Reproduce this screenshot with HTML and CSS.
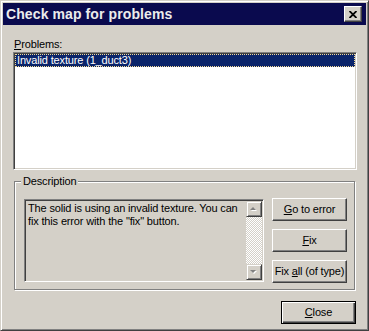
FILE: index.html
```html
<!DOCTYPE html>
<html lang="en">
<head>
    <meta charset="UTF-8">
    <title>Check map for problems</title>
    <link rel="stylesheet" href="styles.css">
</head>
<body>

<div class="window">
    <div class="titlebar">
        <span class="title">Check map for problems</span>
        <div class="caption-btn">
            <svg width="8" height="7" viewBox="0 0 8 7">
                <path d="M0.5 0 L7.5 7 M7.5 0 L0.5 7" stroke="#000" stroke-width="1.8" fill="none"/>
            </svg>
        </div>
    </div>

    <div class="dialog">
        <div class="label"><u>P</u>roblems:</div>
        <div class="listbox">
            <div class="list-item selected">Invalid texture (1_duct3)</div>
        </div>

        <!-- Description group -->
        <fieldset class="group">
            <legend>Description</legend>
            <div class="group-row">
                <div class="textbox">
                    <div class="textbox-text">The solid is using an invalid texture. You can fix this error with the "fix" button.</div>
                    <div class="scrollbar">
                        <div class="sb-btn">
                            <svg width="8" height="5" viewBox="0 0 8 5">
                                <polygon points="4,1 7,4 1,4" fill="#fff"/>
                                <polygon points="3,0 6,3 0,3" fill="#808080"/>
                            </svg>
                        </div>
                        <div class="sb-track"></div>
                        <div class="sb-btn">
                            <svg width="8" height="5" viewBox="0 0 8 5">
                                <polygon points="1,1 7,1 4,4" fill="#fff"/>
                                <polygon points="0,0 6,0 3,3" fill="#808080"/>
                            </svg>
                        </div>
                    </div>
                </div>
                <div class="btn-col">
                    <div class="btn"><span><u>G</u>o to error</span></div>
                    <div class="btn"><span><u>F</u>ix</span></div>
                    <div class="btn"><span>Fix <u>a</u>ll (of type)</span></div>
                </div>
            </div>
        </fieldset>

        <div class="footer">
            <div class="btn default"><span><u>C</u>lose</span></div>
        </div>
    </div>
</div>

</body>
</html>
```

FILE: styles.css
```css
* {
    margin: 0;
    padding: 0;
    box-sizing: border-box;
}
body {
    background: #d4d0c8;
    font-family: 'Liberation Sans', Arial, sans-serif;
    font-size: 11px;
    line-height: 13px;
    letter-spacing: -0.15px;
    color: #000;
}
.window {
    width: 369px;
    height: 331px;
    background: #d4d0c8;
    border: 1px solid;
    border-color: #d4d0c8 #404040 #404040 #d4d0c8;
    box-shadow: inset 1px 1px #fff, inset -1px -1px #808080;
    padding: 2px 2px;
}
.titlebar {
    height: 22px;
    background: #0a0a4e;
    display: flex;
    align-items: center;
    justify-content: space-between;
    padding-left: 3px;
}
.title {
    color: #ececec;
    font-size: 14px;
    font-weight: bold;
    line-height: 16px;
    letter-spacing: 0.1px;
}
.caption-btn {
    width: 18px;
    height: 16px;
    margin-right: 4px;
    background: #d4d0c8;
    border: 1px solid;
    border-color: #fff #404040 #404040 #fff;
    box-shadow: inset -1px -1px #808080;
    display: flex;
    align-items: center;
    justify-content: center;
}
.dialog {
    padding: 13px 9px 0 10px;
}
.label {
    height: 13px;
    margin-bottom: 1px;
    padding-left: 1px;
}
.listbox {
    height: 118px;
    background: #fff;
    border: 1px solid;
    border-color: #808080 #fff #fff #808080;
    box-shadow: inset 1px 1px #404040, inset -1px -1px #d4d0c8;
    padding: 1px;
}
.list-item {
    height: 13px;
    padding-left: 2px;
    white-space: nowrap;
}
.list-item.selected {
    background: #0a246a;
    color: #fff;
    outline: 1px dotted #f5db95;
    outline-offset: -1px;
}
.group {
    margin: 5px 2px 0 1px;
    border: 1px solid #808080;
    box-shadow: inset 1px 1px #fff, 1px 1px #fff;
    min-inline-size: 0;
}
.group legend {
    margin-left: 6px;
    padding: 0 2px;
    line-height: 13px;
    background: #d4d0c8;
}
.group-row {
    display: flex;
    align-items: flex-start;
    gap: 8px;
    padding: 11px 7px 6px 9px;
}
.textbox {
    width: 240px;
    height: 83px;
    display: flex;
    border: 1px solid;
    border-color: #808080 #fff #fff #808080;
    box-shadow: inset 1px 1px #404040, inset -1px -1px #d4d0c8;
    padding: 1px;
}
.textbox-text {
    flex: 1;
    padding: 1px 2px;
}
.scrollbar {
    width: 16px;
    display: flex;
    flex-direction: column;
}
.sb-btn {
    height: 16px;
    background: #d4d0c8;
    border: 1px solid;
    border-color: #d4d0c8 #404040 #404040 #d4d0c8;
    box-shadow: inset 1px 1px #fff, inset -1px -1px #808080;
    display: flex;
    align-items: center;
    justify-content: center;
}
.sb-track {
    flex: 1;
    background: repeating-conic-gradient(#fff 0 25%, #d4d0c8 0 50%) 0 0 / 2px 2px;
}
.btn-col {
    display: flex;
    flex-direction: column;
    gap: 8px;
    margin-top: -1px;
}
.btn {
    width: 75px;
    height: 23px;
    background: #d4d0c8;
    border: 1px solid;
    border-color: #fff #404040 #404040 #fff;
    box-shadow: inset -1px -1px #808080;
    display: flex;
    align-items: center;
    justify-content: center;
    white-space: nowrap;
}
.btn.default {
    border-color: #000;
    box-shadow: inset 1px 1px #fff, inset -1px -1px #404040, inset -2px -2px #808080;
}
.footer {
    display: flex;
    justify-content: flex-end;
    margin-top: 11px;
    padding-right: 1px;
}
```
